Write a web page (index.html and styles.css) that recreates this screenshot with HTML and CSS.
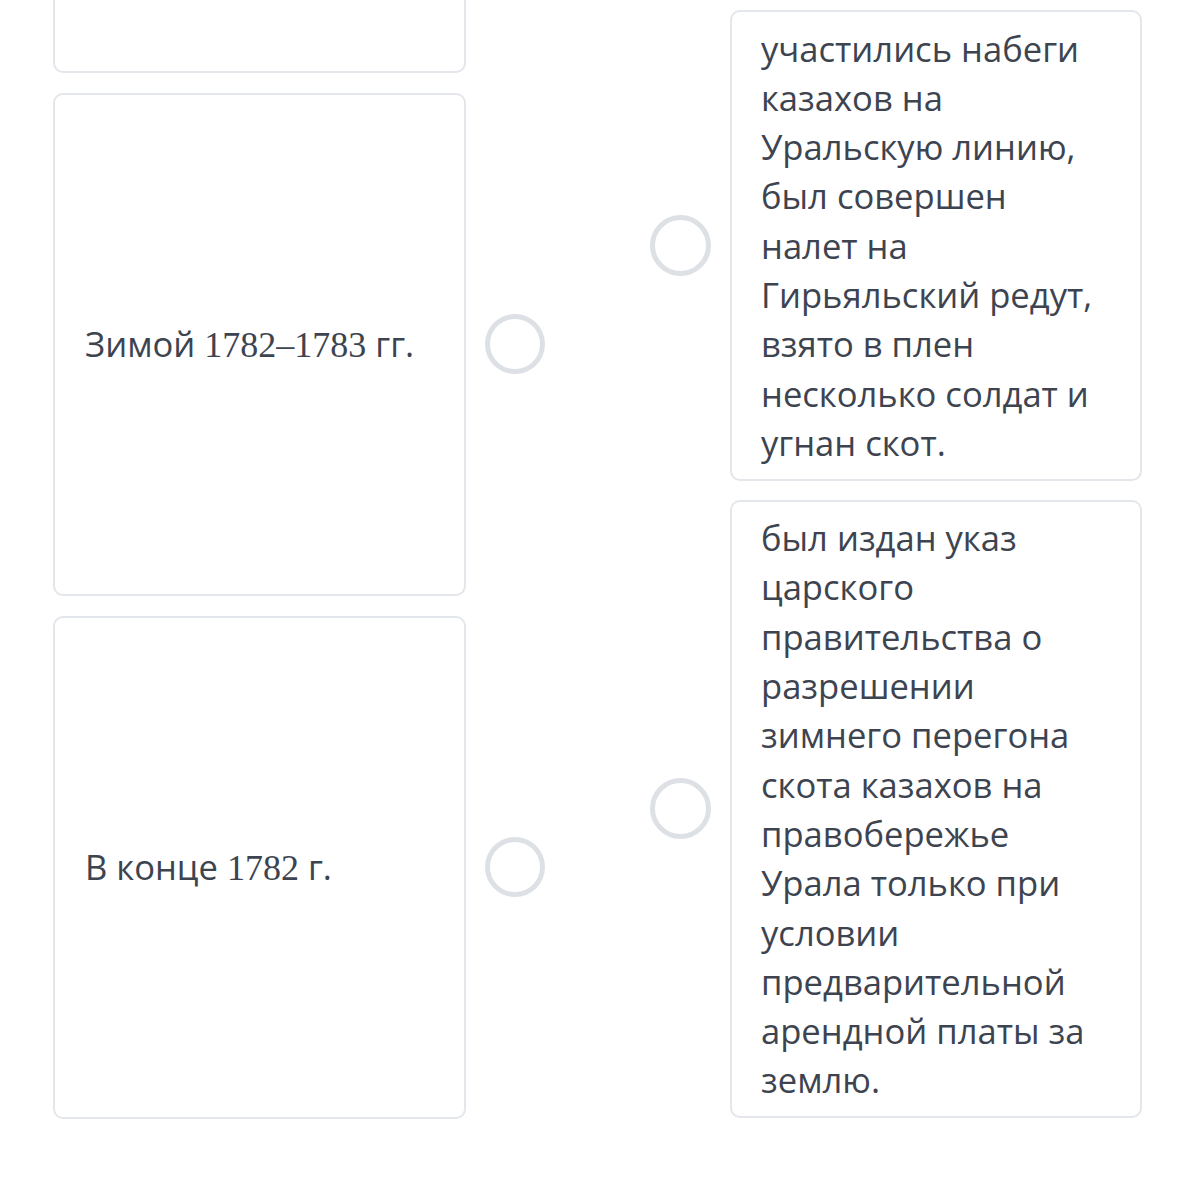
FILE: index.html
```html
<!DOCTYPE html>
<html lang="ru">
<head>
<meta charset="utf-8">
<title>Соответствие</title>
<link rel="stylesheet" href="styles.css">
</head>
<body>
<div class="board">
  <div class="col col-left">
    <div class="pair">
      <div class="card card-fixed"><p class="text">&nbsp;</p></div>
      <span class="dot"></span>
    </div>
    <div class="pair">
      <div class="card card-fixed"><p class="text">Зимой <span class="num">1782–1783</span> гг.</p></div>
      <span class="dot"></span>
    </div>
    <div class="pair">
      <div class="card card-fixed"><p class="text">В конце <span class="num">1782</span> г.</p></div>
      <span class="dot"></span>
    </div>
  </div>
  <div class="col col-right">
    <div class="pair">
      <span class="dot"></span>
      <div class="card card-flow"><p class="text">участились набеги казахов на Уральскую линию, был совершен налет на Гирьяльский редут, взято в плен несколько солдат и угнан скот.</p></div>
    </div>
    <div class="pair">
      <span class="dot"></span>
      <div class="card card-flow"><p class="text">был издан указ царского правительства о разрешении зимнего перегона скота казахов на правобережье Урала только при условии предварительной арендной платы за землю.</p></div>
    </div>
  </div>
</div>
</body>
</html>
```

FILE: styles.css
```css
html, body {
  margin: 0;
  padding: 0;
  background: #ffffff;
}
body {
  font-family: "Open Sans", "Noto Sans", sans-serif;
  color: #3d4450;
  overflow: hidden;
  height: 1200px;
}
.board {
  display: flex;
  align-items: flex-start;
  padding: 10px 0 0 53px;
  gap: 105px;
}
.col {
  display: flex;
  flex-direction: column;
}
.col-left {
  margin-top: -440.5px;
  gap: 19.5px;
}
.col-right {
  gap: 19px;
}
.pair {
  display: flex;
  align-items: center;
  gap: 19px;
}
.card {
  box-sizing: border-box;
  width: 413px;
  border: 2px solid #e3e6ea;
  border-radius: 10px;
  background: #fff;
}
.card-fixed {
  height: 503.5px;
  display: flex;
  align-items: center;
  padding: 0 30px;
}
.card-flow {
  width: 412px;
  padding: 11.5px 38px 11.5px 29px;
}
.text {
  margin: 0;
  font-size: 34.6px;
  line-height: 49.3px;
}
.num {
  font-family: "Liberation Serif", "Times New Roman", serif;
  font-size: 36px;
}
.dot {
  flex: none;
  box-sizing: border-box;
  width: 60px;
  height: 60px;
  border: 5px solid #dde1e6;
  border-radius: 50%;
}
.col-right .dot {
  width: 61px;
  height: 61px;
}
```
